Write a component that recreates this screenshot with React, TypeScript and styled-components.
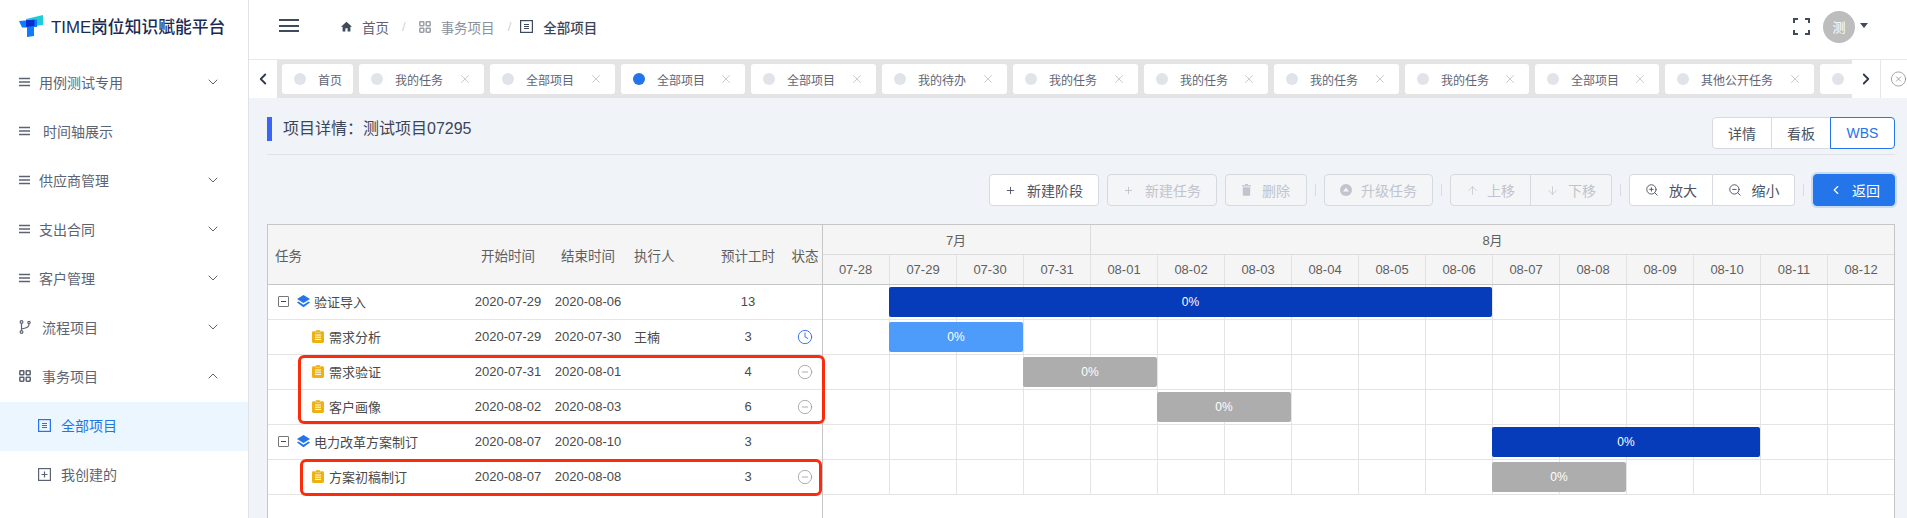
import React from "react";
import styled, { createGlobalStyle } from "styled-components";
import { ChevronDown, ChevronUp, ChevronLeft, ChevronRight, X, Plus, ArrowUp, ArrowDown, ZoomIn, ZoomOut, Clock, MinusCircle, CircleX } from "lucide-react";

const Global = createGlobalStyle`
  html, body { margin: 0; padding: 0; height: 518px; overflow: hidden; background: #fff; }
  body, button { font-family: "Liberation Sans", "Noto Sans CJK SC", sans-serif; }
  * { box-sizing: border-box; }
`;

const Page = styled.div`
  display: flex;
  width: 1907px;
  height: 518px;
  overflow: hidden;
`;

/* ---------- sidebar ---------- */
const Sidebar = styled.aside`
  width: 249px;
  flex: none;
  background: #fff;
  border-right: 1px solid #dfe2e7;
`;
const Brand = styled.div`
  height: 59px;
  padding: 0 0 8px 19px;
  display: flex;
  align-items: center;
  gap: 8px;
  font-size: 16.8px;
  font-weight: 500;
  color: #1b2a52;
  white-space: nowrap;
`;
const MenuItem = styled.div<{ $active?: boolean; $sub?: boolean; $flush?: boolean }>`
  height: 49px;
  display: flex;
  align-items: center;
  padding: 0 0 ${(p) => (p.$flush ? 0 : 3)}px ${(p) => (p.$sub ? 38 : 19)}px;
  font-size: 14px;
  color: ${(p) => (p.$active ? "#2474ea" : "#5c6474")};
  background: ${(p) => (p.$active ? "#ecf6fe" : "transparent")};
`;
const MenuIcon = styled.svg<{ $gap: number }>`
  flex: none;
  margin-right: ${(p) => p.$gap}px;
`;
const MenuArrow = styled.span`
  margin-left: auto;
  margin-right: 27px;
  display: flex;
  color: #5c6474;
`;

/* ---------- main ---------- */
const Main = styled.main`
  flex: 1;
  min-width: 0;
  display: flex;
  flex-direction: column;
  background: #f0f3f7;
`;
const Header = styled.header`
  height: 59px;
  flex: none;
  background: #fff;
  display: flex;
  align-items: center;
  padding: 0 39px 6px 30px;
`;
const HamburgerLines = styled.span`
  width: 20px;
  height: 13px;
  border-top: 2px solid #3f4b5c;
  border-bottom: 2px solid #3f4b5c;
  position: relative;
  flex: none;
  margin: 0 42px 2px 0;
  &::after {
    content: "";
    position: absolute;
    left: 0;
    right: 0;
    top: 3.5px;
    height: 2px;
    background: #3f4b5c;
  }
`;
const Crumb = styled.span<{ $current?: boolean }>`
  display: flex;
  align-items: center;
  gap: 10px;
  font-size: 13.5px;
  color: ${(p) => (p.$current ? "#3c4557" : "#8c919b")};
  font-weight: ${(p) => (p.$current ? 500 : 400)};
`;
const CrumbFirst = styled(Crumb)`
  color: #5c6474;
`;
const Slash = styled.span<{ $after: number }>`
  color: #cfd2d8;
  font-size: 13px;
  margin: 0 ${(p) => p.$after}px 0 13px;
`;
const HeaderRight = styled.div`
  margin-left: auto;
  display: flex;
  align-items: center;
`;
const Avatar = styled.span`
  width: 32px;
  height: 32px;
  border-radius: 50%;
  background: #bdbdbd;
  color: #fff;
  font-size: 13px;
  display: flex;
  align-items: center;
  justify-content: center;
  margin-left: 13px;
`;
const Caret = styled.span`
  width: 0;
  height: 0;
  border-left: 4px solid transparent;
  border-right: 4px solid transparent;
  border-top: 5px solid #3f4b5c;
  margin: 0 0 3px 5px;
`;

/* ---------- tabs ---------- */
const TabsBar = styled.div`
  height: 39px;
  flex: none;
  display: flex;
  background: #fff;
  border-top: 1px solid #e9e9e9;
`;
const TabArrow = styled.button`
  width: 28px;
  flex: none;
  border: 0;
  padding: 0;
  background: #fff;
  color: #2f3a4a;
  display: flex;
  align-items: center;
  justify-content: center;
`;
const TabCloseAll = styled(TabArrow)`
  width: 27px;
  padding-left: 9px;
  border-left: 1px solid #e6e6e6;
  color: #70757f;
`;
const TabScroller = styled.div`
  flex: 1;
  min-width: 0;
  overflow: hidden;
  display: flex;
  gap: 6px;
  align-items: flex-start;
  padding: 4px 0 0 5px;
  background: #e4e4e4;
`;
const Tab = styled.div<{ $w: number }>`
  flex: none;
  width: ${(p) => p.$w}px;
  height: 30px;
  background: #fff;
  border-radius: 3px;
  display: flex;
  align-items: center;
  padding-left: 12px;
  font-size: 12px;
  color: #5e6675;
  white-space: nowrap;
`;
const TabDot = styled.span<{ $active?: boolean }>`
  width: 12px;
  height: 12px;
  border-radius: 50%;
  flex: none;
  margin-right: 12px;
  background: ${(p) => (p.$active ? "#2474ea" : "#e0e4e9")};
`;
const TabClose = styled.span`
  margin-left: auto;
  margin-right: 12px;
  display: flex;
  color: #a3a7ae;
`;

/* ---------- content ---------- */
const Content = styled.section`
  flex: 1;
  min-height: 0;
  padding: 19px 12px 0 18px;
`;
const TitleRow = styled.div`
  display: flex;
  align-items: flex-start;
  justify-content: space-between;
  height: 38px;
  border-bottom: 1px solid #dfe2e6;
`;
const Title = styled.h1`
  margin: 0;
  height: 24px;
  border-left: 5px solid #3b65f5;
  padding-left: 11px;
  font-size: 16px;
  line-height: 24px;
  font-weight: 400;
  color: #3c4557;
`;
const Segments = styled.div`
  display: flex;
`;
const Segment = styled.button<{ $active?: boolean; $w: number }>`
  width: ${(p) => p.$w}px;
  height: 32px;
  margin-left: -1px;
  padding: 0;
  background: #fff;
  font-size: 14px;
  color: ${(p) => (p.$active ? "#2474ea" : "#4b5262")};
  border: 1px solid ${(p) => (p.$active ? "#2474ea" : "#d6d9df")};
  position: relative;
  z-index: ${(p) => (p.$active ? 1 : 0)};
  &:first-child { border-radius: 4px 0 0 4px; }
  &:last-child { border-radius: 0 4px 4px 0; }
`;
const Toolbar = styled.div`
  display: flex;
  justify-content: flex-end;
  align-items: center;
  gap: 8px;
  margin: 19px 0 18px;
  height: 32px;
`;
const ToolButton = styled.button<{ $pad?: number; $gap?: number }>`
  height: 32px;
  display: flex;
  align-items: center;
  gap: ${(p) => p.$gap ?? 11}px;
  padding: 0 ${(p) => p.$pad ?? 15}px;
  font-size: 14px;
  white-space: nowrap;
  border: 1px solid #d6d9df;
  border-radius: 4px;
  background: #fff;
  color: #4b5262;
  &:disabled {
    background: #f4f5f7;
    color: #c0c4cc;
  }
`;
const PrimaryButton = styled(ToolButton)`
  background: #2474ea;
  border-color: #2474ea;
  color: #fff;
  box-shadow: 0 0 0 2px rgba(36, 116, 234, 0.18);
  padding: 0 14px 0 15px;
  margin-left: 1px;
  gap: 9px;
`;
const ButtonGroup = styled.div`
  display: flex;
  & > button:first-child { border-radius: 4px 0 0 4px; }
  & > button:last-child { border-radius: 0 4px 4px 0; border-left: 0; }
`;
const Sep = styled.span`
  width: 1px;
  height: 12px;
  background: #d9dce1;
`;

/* ---------- gantt ---------- */
const Gantt = styled.div`
  height: 300px;
  display: flex;
  background: #fff;
  border: 1px solid #c6c6c6;
  border-bottom: 0;
  color: #4a4a4a;
`;
const LeftPane = styled.div`
  width: 554px;
  flex: none;
  box-shadow: 1px 0 0 #c6c6c6;
  position: relative;
  z-index: 1;
`;
const COLS = "200px 80px 80px 80px 80px 34px";
const LeftHead = styled.div`
  height: 60px;
  display: grid;
  grid-template-columns: ${COLS};
  align-items: center;
  background: #f5f5f5;
  border-bottom: 1px solid #c6c6c6;
  font-size: 13.5px;
  color: #5f5f5f;
  white-space: nowrap;
`;
const Row = styled.div`
  height: 35px;
  display: grid;
  grid-template-columns: ${COLS};
  align-items: center;
  border-bottom: 1px solid #e4e4e4;
  padding-bottom: 1px;
  font-size: 13px;
  color: #4a4a4a;
  white-space: nowrap;
`;
const HeadName = styled.span`
  padding-left: 7px;
`;
const Centered = styled.span`
  text-align: center;
`;
const Owner = styled.span`
  padding-left: 6px;
`;
const TaskName = styled.span<{ $child?: boolean }>`
  display: flex;
  align-items: center;
  padding-left: ${(p) => (p.$child ? 44 : 10)}px;
`;
const Expander = styled.span`
  width: 11px;
  height: 11px;
  border: 1px solid #777;
  border-radius: 1px;
  margin-right: 8px;
  display: flex;
  align-items: center;
  justify-content: center;
  &::after {
    content: "";
    width: 5px;
    height: 1px;
    background: #444;
  }
`;
const StatusCell = styled.span`
  display: flex;
  justify-content: center;
`;
const Highlight = styled.div<{ $left: number; $top: number; $w: number; $h: number }>`
  position: absolute;
  left: ${(p) => p.$left}px;
  top: ${(p) => p.$top}px;
  width: ${(p) => p.$w}px;
  height: ${(p) => p.$h}px;
  border: 3px solid #fb2c0b;
  border-radius: 6px;
  pointer-events: none;
  z-index: 2;
`;
const ChartPane = styled.div`
  flex: 1;
  min-width: 0;
`;
const MonthRow = styled.div`
  height: 30px;
  display: grid;
  grid-template-columns: repeat(16, 1fr);
  background: #f5f5f5;
  border-bottom: 1px solid #dcdcdc;
`;
const Month = styled.div<{ $span: number }>`
  grid-column: span ${(p) => p.$span};
  display: flex;
  align-items: center;
  justify-content: center;
  font-size: 13px;
  color: #5f5f5f;
  & + & { border-left: 1px solid #dcdcdc; }
`;
const DayRow = styled.div`
  height: 30px;
  display: grid;
  grid-template-columns: repeat(16, 1fr);
  background: #f5f5f5;
  border-bottom: 1px solid #c6c6c6;
`;
const Day = styled.div`
  display: flex;
  align-items: center;
  justify-content: center;
  font-size: 13px;
  color: #5f5f5f;
  & + & { border-left: 1px solid #e2e2e2; }
`;
const ChartRow = styled.div`
  height: 35px;
  display: grid;
  grid-template-columns: repeat(16, 1fr);
  border-bottom: 1px solid #e4e4e4;
  background-image: linear-gradient(to right, #e4e4e4 1px, transparent 1px);
  background-size: calc(100% / 16) 100%;
  padding: 2px 0;
`;
const Bar = styled.div<{ $from: number; $span: number; $color: string }>`
  grid-column: ${(p) => p.$from + 1} / span ${(p) => p.$span};
  background: ${(p) => p.$color};
  border-radius: 2px;
  color: #fff;
  font-size: 12px;
  display: flex;
  align-items: center;
  justify-content: center;
`;

/* ---------- drawings ---------- */
const Lines = ({ gap = 9 }: { gap?: number }) => (
  <MenuIcon $gap={gap} width="11" height="10" viewBox="0 0 11 10">
    <path d="M0 1.5h11M0 5h11M0 8.5h11" stroke="#5c6474" strokeWidth="1.3" />
  </MenuIcon>
);
const Fork = () => (
  <MenuIcon $gap={11} width="12" height="14" viewBox="0 0 12 14" fill="none" stroke="#5c6474" strokeWidth="1.2">
    <circle cx="2.5" cy="2" r="1.4" />
    <circle cx="2.5" cy="12" r="1.4" />
    <circle cx="10" cy="2.5" r="1.2" />
    <path d="M2.5 3.4v7.2M10 3.7c0 3-1 4-7.5 5.3" />
  </MenuIcon>
);
const Grid = ({ gap = 11, color = "#5c6474" }: { gap?: number; color?: string }) => (
  <MenuIcon $gap={gap} width="12" height="12" viewBox="0 0 12 12" fill="none" stroke={color} strokeWidth="1.5">
    <rect x="0.8" y="0.8" width="4" height="4" rx="0.6" />
    <rect x="7.2" y="0.8" width="4" height="4" rx="0.6" />
    <rect x="0.8" y="7.2" width="4" height="4" rx="0.6" />
    <rect x="7.2" y="7.2" width="4" height="4" rx="0.6" />
  </MenuIcon>
);
const Board = ({ color, gap }: { color: string; gap: number }) => (
  <MenuIcon $gap={gap} width="13" height="13" viewBox="0 0 13 13" fill="none" stroke={color}>
    <rect x="0.6" y="0.6" width="11.8" height="11.8" strokeWidth="1.2" />
    <path d="M4 4.5h5M4 6.5h5M4 8.5h5" strokeWidth="1" />
  </MenuIcon>
);
const PlusBox = () => (
  <MenuIcon $gap={10} width="13" height="13" viewBox="0 0 13 13" fill="none" stroke="#5c6474">
    <rect x="0.6" y="0.6" width="11.8" height="11.8" strokeWidth="1.2" />
    <path d="M6.5 3.5v6M3.5 6.5h6" strokeWidth="1.2" />
  </MenuIcon>
);
const Logo = () => (
  <svg width="24" height="22" viewBox="0 0 24 22">
    <path d="M7 4 L24 0 V10 L7 12Z" fill="#1fcbd8" />
    <path d="M0 6 L18 4.5 V12 H15 V21 L8 22 V12.5 H3 Z" fill="#0f7bff" />
    <path d="M7 5.3 L15.5 4.8 V11 L7 12Z" fill="#0a2fd0" />
  </svg>
);
const Home = () => (
  <svg width="11" height="11" viewBox="0 0 11 11" fill="#3f4b5c">
    <path d="M5.5 .8 0 5.8h1.6V10.5h2.8V7.2h2.2v3.3h2.8V5.8H11z" />
  </svg>
);
const Fullscreen = () => (
  <svg width="17" height="17" viewBox="0 0 17 17" fill="none" stroke="#3f4b5c" strokeWidth="2">
    <path d="M1 5V1h4M12 1h4v4M16 12v4h-4M5 16H1v-4" />
  </svg>
);
const Layers = () => (
  <svg width="13" height="13" viewBox="0 0 13 13" style={{ marginRight: 4 }}>
    <path d="M6.5 0 13 4 6.5 8 0 4z" fill="#2474ea" />
    <path d="M1.4 6.6 6.5 9.8l5.1-3.2L13 7.6l-6.5 4.6L0 7.6z" fill="#2474ea" />
  </svg>
);
const Task = () => (
  <svg width="12" height="13" viewBox="0 0 12 13" style={{ marginRight: 5 }}>
    <rect x="0" y="1.2" width="12" height="11.8" rx="1.4" fill="#eeb111" />
    <rect x="3.6" y="0" width="4.8" height="2.6" rx="0.8" fill="#eeb111" stroke="#fff" strokeWidth="0.4" />
    <path d="M3 5h6M3 7.2h6M3 9.4h6" stroke="#fff" strokeWidth="1" />
  </svg>
);
const Trash = () => (
  <svg width="9" height="12" viewBox="0 0 9 12" fill="#c0c4cc">
    <rect x="0" y="1.2" width="9" height="1.2" />
    <rect x="3" y="0" width="3" height="1.2" />
    <path d="M.8 3.2h7.4v7.6a1 1 0 0 1-1 1H1.8a1 1 0 0 1-1-1z" />
  </svg>
);
const Upgrade = () => (
  <svg width="12" height="12" viewBox="0 0 12 12">
    <circle cx="6" cy="6" r="6" fill="#c0c4cc" />
    <path d="M6 3.4 9 7.4H3z" fill="#f4f5f7" />
  </svg>
);

/* ---------- data ---------- */
const tabs: [string, number, boolean?][] = [
  ["首页", 71], ["我的任务", 125], ["全部项目", 125], ["全部项目", 124, true], ["全部项目", 125], ["我的待办", 125],
  ["我的任务", 125], ["我的任务", 124], ["我的任务", 125], ["我的任务", 124], ["全部项目", 124], ["其他公开任务", 149], ["全部项目", 125],
];
const days = ["07-28","07-29","07-30","07-31","08-01","08-02","08-03","08-04","08-05","08-06","08-07","08-08","08-09","08-10","08-11","08-12"];
type R = { name: string; stage?: boolean; s: string; e: string; who?: string; h: number; st?: "run" | "wait"; bar: [number, number, string] };
const DARK = "#063cba", LIGHT = "#4d9cfb", GREY = "#adadad";
const rows: R[] = [
  { name: "验证导入", stage: true, s: "2020-07-29", e: "2020-08-06", h: 13, bar: [1, 9, DARK] },
  { name: "需求分析", s: "2020-07-29", e: "2020-07-30", who: "王楠", h: 3, st: "run", bar: [1, 2, LIGHT] },
  { name: "需求验证", s: "2020-07-31", e: "2020-08-01", h: 4, st: "wait", bar: [3, 2, GREY] },
  { name: "客户画像", s: "2020-08-02", e: "2020-08-03", h: 6, st: "wait", bar: [5, 2, GREY] },
  { name: "电力改革方案制订", stage: true, s: "2020-08-07", e: "2020-08-10", h: 3, bar: [10, 4, DARK] },
  { name: "方案初稿制订", s: "2020-08-07", e: "2020-08-08", h: 3, st: "wait", bar: [10, 2, GREY] },
];
const Arrow = ({ up }: { up?: boolean }) => (
  <MenuArrow>{up ? <ChevronUp size={16} strokeWidth={1.5} /> : <ChevronDown size={16} strokeWidth={1.5} />}</MenuArrow>
);

export default function App() {
  return (
    <Page>
      <Global />
      <Sidebar>
        <Brand><Logo />TIME岗位知识赋能平台</Brand>
        <MenuItem><Lines />用例测试专用<Arrow /></MenuItem>
        <MenuItem><Lines gap={13} />时间轴展示</MenuItem>
        <MenuItem><Lines />供应商管理<Arrow /></MenuItem>
        <MenuItem><Lines />支出合同<Arrow /></MenuItem>
        <MenuItem><Lines />客户管理<Arrow /></MenuItem>
        <MenuItem><Fork />流程项目<Arrow /></MenuItem>
        <MenuItem><Grid />事务项目<Arrow up /></MenuItem>
        <MenuItem $sub $active><Board color="#2474ea" gap={10} />全部项目</MenuItem>
        <MenuItem $sub><PlusBox />我创建的</MenuItem>
        <MenuItem $sub $flush><PlusBox />我参与的</MenuItem>
      </Sidebar>
      <Main>
        <Header>
          <HamburgerLines />
          <CrumbFirst><Home />首页</CrumbFirst>
          <Slash $after={13}>/</Slash>
          <Crumb><Grid gap={0} color="#9a9ea6" />事务项目</Crumb>
          <Slash $after={9}>/</Slash>
          <Crumb $current><Board color="#3f4b5c" gap={0} />全部项目</Crumb>
          <HeaderRight>
            <Fullscreen />
            <Avatar>测</Avatar>
            <Caret />
          </HeaderRight>
        </Header>
        <TabsBar>
          <TabArrow><ChevronLeft size={18} strokeWidth={2.4} /></TabArrow>
          <TabScroller>
            {tabs.map(([t, w, a], i) => (
              <Tab key={i} $w={w}>
                <TabDot $active={a} />
                {t}
                {i > 0 && <TabClose><X size={14} strokeWidth={1} /></TabClose>}
              </Tab>
            ))}
          </TabScroller>
          <TabArrow><ChevronRight size={18} strokeWidth={2.4} /></TabArrow>
          <TabCloseAll><CircleX size={18} strokeWidth={0.9} /></TabCloseAll>
        </TabsBar>
        <Content>
          <TitleRow>
            <Title>项目详情：测试项目07295</Title>
            <Segments>
              <Segment $w={60}>详情</Segment>
              <Segment $w={60}>看板</Segment>
              <Segment $w={65} $active>WBS</Segment>
            </Segments>
          </TitleRow>
          <Toolbar>
            <ToolButton><Plus size={11} />新建阶段</ToolButton>
            <ToolButton disabled><Plus size={11} />新建任务</ToolButton>
            <ToolButton disabled $pad={16}><Trash />删除</ToolButton>
            <Sep />
            <ToolButton disabled $gap={9}><Upgrade />升级任务</ToolButton>
            <Sep />
            <ButtonGroup>
              <ToolButton disabled $gap={8}><ArrowUp size={13} strokeWidth={1.4} />上移</ToolButton>
              <ToolButton disabled $gap={9}><ArrowDown size={13} strokeWidth={1.4} />下移</ToolButton>
            </ButtonGroup>
            <Sep />
            <ButtonGroup>
              <ToolButton $gap={10}><ZoomIn size={14} strokeWidth={1.6} />放大</ToolButton>
              <ToolButton $pad={14.5} $gap={10}><ZoomOut size={14} strokeWidth={1.6} />缩小</ToolButton>
            </ButtonGroup>
            <Sep />
            <PrimaryButton><ChevronLeft size={14} strokeWidth={2} />返回</PrimaryButton>
          </Toolbar>
          <Gantt>
            <LeftPane>
              <LeftHead>
                <HeadName>任务</HeadName>
                <Centered>开始时间</Centered>
                <Centered>结束时间</Centered>
                <Owner>执行人</Owner>
                <Centered>预计工时</Centered>
                <Centered>状态</Centered>
              </LeftHead>
              {rows.map((r) => (
                <Row key={r.name}>
                  <TaskName $child={!r.stage}>
                    {r.stage ? <><Expander /><Layers /></> : <Task />}
                    {r.name}
                  </TaskName>
                  <Centered>{r.s}</Centered>
                  <Centered>{r.e}</Centered>
                  <Owner>{r.who}</Owner>
                  <Centered>{r.h}</Centered>
                  <StatusCell>
                    {r.st === "run" && <Clock size={16} color="#2f6bf0" strokeWidth={1.4} />}
                    {r.st === "wait" && <MinusCircle size={16} color="#999" strokeWidth={1.2} />}
                  </StatusCell>
                </Row>
              ))}
              <Highlight $left={30} $top={130} $w={527} $h={69} />
              <Highlight $left={32} $top={234} $w={522} $h={37} />
            </LeftPane>
            <ChartPane>
              <MonthRow>
                <Month $span={4}>7月</Month>
                <Month $span={12}>8月</Month>
              </MonthRow>
              <DayRow>
                {days.map((d) => <Day key={d}>{d}</Day>)}
              </DayRow>
              {rows.map((r) => (
                <ChartRow key={r.name}>
                  <Bar $from={r.bar[0]} $span={r.bar[1]} $color={r.bar[2]}>0%</Bar>
                </ChartRow>
              ))}
            </ChartPane>
          </Gantt>
        </Content>
      </Main>
    </Page>
  );
}
